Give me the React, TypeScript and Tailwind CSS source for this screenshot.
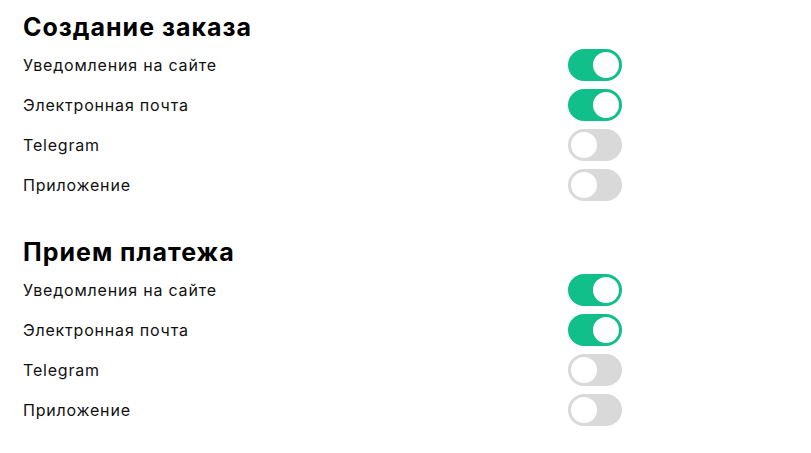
import { useState } from "react";

type Channel = { label: string; on: boolean };

const sections: { title: string; channels: Channel[] }[] = [
  {
    title: "Создание заказа",
    channels: [
      { label: "Уведомления на сайте", on: true },
      { label: "Электронная почта", on: true },
      { label: "Telegram", on: false },
      { label: "Приложение", on: false },
    ],
  },
  {
    title: "Прием платежа",
    channels: [
      { label: "Уведомления на сайте", on: true },
      { label: "Электронная почта", on: true },
      { label: "Telegram", on: false },
      { label: "Приложение", on: false },
    ],
  },
];

function Toggle({ checked, onChange }: { checked: boolean; onChange: () => void }) {
  return (
    <button
      type="button"
      role="switch"
      aria-checked={checked}
      onClick={onChange}
      className={`flex h-[32px] w-[54px] shrink-0 items-center rounded-full p-[3px] transition-colors ${
        checked ? "justify-end bg-[#10bf89]" : "justify-start bg-[#d9d9d9]"
      }`}
    >
      <span className="block h-[26px] w-[26px] rounded-full bg-white" />
    </button>
  );
}

function Section({ title, channels }: { title: string; channels: Channel[] }) {
  const [state, setState] = useState(channels.map((c) => c.on));

  return (
    <section>
      <h2 className="h-[35px] text-[25px] font-bold leading-[35px] tracking-[1px] text-black">
        {title}
      </h2>
      <ul>
        {channels.map((c, i) => (
          <li key={c.label} className="flex h-10 items-center justify-between">
            <span className="text-[16px] tracking-[0.8px] text-[#111]">{c.label}</span>
            <Toggle
              checked={state[i]}
              onChange={() => setState((s) => s.map((v, j) => (j === i ? !v : v)))}
            />
          </li>
        ))}
      </ul>
    </section>
  );
}

export default function App() {
  return (
    <div
      className="min-h-[453px] bg-white pt-[10px] pl-[23px]"
      style={{ fontFamily: "Inter, 'Noto Sans', sans-serif" }}
    >
      <div className="flex w-[599px] flex-col gap-[30px]">
        {sections.map((s) => (
          <Section key={s.title} title={s.title} channels={s.channels} />
        ))}
      </div>
    </div>
  );
}
